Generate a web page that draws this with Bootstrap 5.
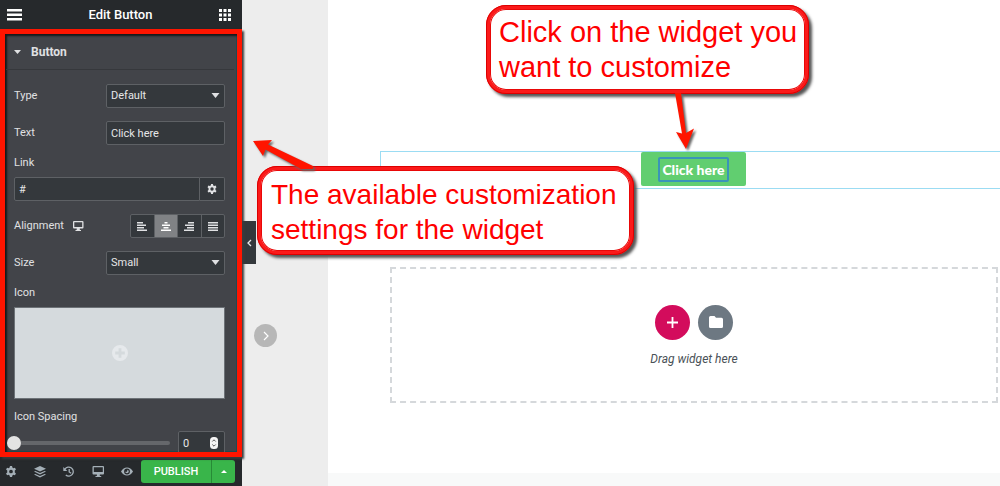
<!DOCTYPE html>
<html lang="en">
<head>
<meta charset="utf-8">
<meta name="viewport" content="width=device-width, initial-scale=1">
<title>Edit Button</title>
<link href="https://cdn.jsdelivr.net/npm/bootstrap@5.3.0/dist/css/bootstrap.min.css" rel="stylesheet">
<style>
  body { font-family: Roboto, sans-serif; font-size: 11px; line-height: 14px; background: #fff; }
  svg { display: block; fill: currentColor; }
  button { font: inherit; color: inherit; border: 0; padding: 0; background: none; }

  /* Side panel */
  .editor-side { width: 242px; background: #26292c; color: #e0e1e3; z-index: 2; }
  .side-head { height: 29px; padding: 0 11px 0 7px; color: #fff; }
  .side-head h1 { font-size: 13px; line-height: 16px; font-weight: 500; }
  .side-panel { border: 5px solid #ff1500; background: #424449; min-height: 0; z-index: 1;
    box-shadow: 2px 2px 2px #3a3c3e, inset 2px 2px 2px #17191b, inset -1px -1px 0 #1d4a52; }
  .section-head { height: 36px; padding: 0 8px; margin: 0 3px 0 1px; border-bottom: 1px solid #36383c; gap: 10px; }
  .section-head h2 { font-size: 12px; line-height: 16px; font-weight: 700; }
  .controls { padding: 14px 12px 0 9px; gap: 13px; }
  .stack { gap: 9px; }
  .stack > label, .stack > .caption { line-height: 10px; }
  .field { height: 24px; background-color: #34383c; border: 1px solid #5e6165; border-radius: 2px; color: #e6e7e8; font-size: 11px; line-height: 14px; padding: 0 4px; min-width: 0; }
  .half { width: 119px; }
  select.field { appearance: none; }
  .caret { right: 5px; top: 9px; pointer-events: none; }
  .field-btn { width: 25px; border: 1px solid #5e6165; border-left: 0; border-radius: 0 2px 2px 0; background: #34383c; }
  .aligns { width: 95px; height: 24px; border: 1px solid #5e6165; border-radius: 2px; background: #34383c; overflow: hidden; }
  .aligns button + button { border-left: 1px solid #5e6165; }
  .aligns .active { background: #808285; color: #fff; }
  .media { height: 92px; background: #d5dadd; color: #e6e9ec; border: 1px solid #6d7277; }
  .slide { appearance: none; background: none; height: 14px; margin-left: -7px; min-width: 0; }
  .slide::-webkit-slider-runnable-track { height: 4px; border-radius: 2px; background: #65676b; }
  .slide::-webkit-slider-thumb { appearance: none; width: 14px; height: 14px; margin-top: -5px; border-radius: 50%; background: #e3e3e3; }
  .amount { width: 47px; appearance: textfield; }
  .amount::-webkit-inner-spin-button { appearance: none; }
  .spin { right: 7px; top: 6px; pointer-events: none; }
  .side-foot { height: 29px; padding: 0 7px 0 5px; color: #a4afb7; }
  .tools { width: 129px; }
  .tools button { width: 13px; }
  .publish { height: 23px; background: #39b54a; color: #fff; border-radius: 3px; overflow: hidden; margin-left: 7px; }
  .publish .main-act { width: 71px; font-weight: 500; border-right: 1px solid #278a36; }

  /* Canvas */
  .gutter { width: 86px; background: #ededed; }
  .fold { left: 0; top: 221px; width: 14px; height: 43px; background: #34383c; color: #e6e7e8; }
  .next { left: 12px; top: 324px; width: 23px; height: 23px; border-radius: 50%; background: #b7b7b7; color: #fff; }
  .site { padding-top: 151px; min-width: 0; overflow: hidden; }
  .widget-row { margin: 0 -7px 78px 52px; height: 38px; border: 1px solid #9bdcf3; }
  .cta { font-family: Lato, sans-serif; font-size: 14px; line-height: 17px; font-weight: 900; color: #fff; background: #61ce70; border-radius: 2px; height: 34px; padding: 0 17px; }
  .cta span { display: block; padding: 2px; border: 2px solid #3a94b8; border-radius: 2px; }
  .dropzone { margin: 0 2px 70px 62px; height: 136px; border: 2px dashed #d5d8db; font-size: 12px; color: #495157; }
  .adders { gap: 8px; margin-bottom: 12px; }
  .round { width: 35px; height: 35px; border-radius: 50%; color: #fff; background: #6d7882; }
  .round.add { background: #d30c5c; }
  .site-foot { min-height: 13px; background: #f8f9f9; }

  /* Callouts laid over the editor */
  .callout { z-index: 3; font-family: "Liberation Sans", sans-serif; font-size: 28px; line-height: 35px; color: #f00; background: #fff; border: 4px solid #fb1a1a; outline: 1px solid #dd0000; outline-offset: -1px; border-radius: 20px; box-shadow: 3px 3px 3px #555, inset 0 0 0 1px #e80808; padding: 7px 10px; height: 89px; white-space: nowrap; }
  .callout svg { filter: drop-shadow(2px 2px 1px #666); fill: #ff1500; }
  .on-widget { left: 486px; top: 5px; width: 323px; font-size: 29px; padding: 6px 9px; }
  .on-widget svg { left: 185px; top: 84px; }
  .on-panel { left: 257px; top: 166px; width: 377px; }
  .on-panel svg { left: -10px; top: -33px; }
</style>
</head>
<body>
<div class="d-flex vh-100 position-relative overflow-hidden">
  <aside class="editor-side d-flex flex-column flex-shrink-0 position-relative">
    <header class="side-head d-flex align-items-center justify-content-between flex-shrink-0">
      <button type="button" aria-label="Menu"><svg width="15" height="12" viewBox="0 0 15 12"><path d="M0 0h15v2.400H0zM0 4.500h15v2.400H0zM0 9h15v2.400H0z"/></svg></button>
      <h1 class="m-0">Edit Button</h1>
      <button type="button" aria-label="Widgets"><svg width="12" height="12" viewBox="0 0 12 12"><path d="M0 0h3v3H0zM4.500 0h3v3h-3zM9 0h3v3H9zM0 4.500h3v3H0zM4.500 4.500h3v3h-3zM9 4.500h3v3H9zM0 9h3v3H0zM4.500 9h3v3h-3zM9 9h3v3H9z"/></svg></button>
    </header>

    <section class="side-panel flex-grow-1 overflow-hidden position-relative">
      <div class="section-head d-flex align-items-center">
        <svg width="7" height="4" viewBox="0 0 7 4"><path d="M0 0h7L3.500 4z"/></svg>
        <h2 class="m-0">Button</h2>
      </div>
      <form class="controls d-flex flex-column">
        <div class="d-flex align-items-center justify-content-between">
          <label for="type">Type</label>
          <div class="half position-relative">
            <select id="type" class="field w-100 d-block"><option>Default</option><option>Info</option></select>
            <svg class="caret position-absolute" width="9" height="5" viewBox="0 0 9 5"><path d="M.5 0h8L4.500 5z"/></svg>
          </div>
        </div>
        <div class="d-flex align-items-center justify-content-between">
          <label for="text">Text</label>
          <input id="text" type="text" class="field half" value="Click here">
        </div>
        <div class="stack d-flex flex-column">
          <label for="link">Link</label>
          <div class="d-flex">
            <input id="link" type="text" class="field flex-grow-1 rounded-end-0" value="#">
            <button type="button" class="field-btn d-flex align-items-center justify-content-center" aria-label="Link options"><svg width="10" height="10" viewBox="0 0 16 16"><path fill-rule="evenodd" d="M6.500 0h3l.5 2.300 1.500.8 2.200-.7 1.500 2.600L13.500 6.600v2.800l1.700 1.600-1.500 2.600-2.200-.7-1.500.8-.5 2.300h-3L6 13.700l-1.500-.8-2.200.7L.8 11l1.700-1.600V6.600L.8 5l1.500-2.600 2.200.7L6 2.300zM8 5.300a2.700 2.700 0 1 0 0 5.400 2.700 2.700 0 0 0 0-5.400z"/></svg></button>
          </div>
        </div>
        <div class="d-flex align-items-center">
          <span>Alignment</span>
          <svg class="ms-2 me-auto" width="13" height="10" viewBox="0 0 13 10"><path fill-rule="evenodd" d="M2 0h8.500q1 0 1 1v5.500q0 1-1 1H7.800V9h1.200v1H3.500V9h1.200V7.500H2q-1 0-1-1V1q0-1 1-1zm.3 1.300v4.600h7.900V1.300z"/></svg>
          <div class="aligns d-flex" role="group" aria-label="Alignment">
            <button type="button" class="flex-fill d-flex align-items-center justify-content-center" aria-label="Left"><svg width="10" height="9" viewBox="0 0 10 9"><path d="M0 0h6v1.500H0zM0 2.500h9V4H0zM0 5h7v1.500H0zM0 7.500h10V9H0z"/></svg></button>
            <button type="button" class="active flex-fill d-flex align-items-center justify-content-center" aria-label="Center"><svg width="10" height="9" viewBox="0 0 10 9"><path d="M3.500 0h3v1.500h-3zM1 2.500h8V4H1zM2.500 5h5v1.500h-5zM0 7.500h10V9H0z"/></svg></button>
            <button type="button" class="flex-fill d-flex align-items-center justify-content-center" aria-label="Right"><svg width="10" height="9" viewBox="0 0 10 9"><path d="M4 0h6v1.500H4zM1 2.500h9V4H1zM3 5h7v1.500H3zM0 7.500h10V9H0z"/></svg></button>
            <button type="button" class="flex-fill d-flex align-items-center justify-content-center" aria-label="Justified"><svg width="10" height="9" viewBox="0 0 10 9"><path d="M0 0h10v1.500H0zM0 2.500h10V4H0zM0 5h10v1.500H0zM0 7.500h10V9H0z"/></svg></button>
          </div>
        </div>
        <div class="d-flex align-items-center justify-content-between">
          <label for="size">Size</label>
          <div class="half position-relative">
            <select id="size" class="field w-100 d-block"><option>Small</option><option>Medium</option></select>
            <svg class="caret position-absolute" width="9" height="5" viewBox="0 0 9 5"><path d="M.5 0h8L4.500 5z"/></svg>
          </div>
        </div>
        <div class="stack d-flex flex-column">
          <span class="caption">Icon</span>
          <button type="button" class="media d-flex align-items-center justify-content-center" aria-label="Choose icon"><svg width="16" height="16" viewBox="0 0 16 16"><path fill-rule="evenodd" d="M8 0a8 8 0 1 0 0 16A8 8 0 0 0 8 0zM6.600 3.200h2.800v3.400h3.400v2.800H9.400v3.400H6.600V9.400H3.200V6.600h3.400z"/></svg></button>
        </div>
        <div class="stack d-flex flex-column">
          <label for="spacing">Icon Spacing</label>
          <div class="d-flex align-items-center">
            <input id="spacing" type="range" class="slide flex-grow-1" min="0" max="50" value="0">
            <div class="position-relative ms-2">
              <input type="number" class="field amount d-block" value="0" aria-label="Icon spacing in pixels">
              <svg class="spin position-absolute" width="8" height="12" viewBox="0 0 8 12"><rect width="8" height="12" rx="3.500" fill="#f4f4f4"/><path d="M2.300 4.500L4 2.800l1.700 1.700M2.300 7.500L4 9.200l1.700-1.700" fill="none" stroke="#555"/></svg>
            </div>
          </div>
        </div>
      </form>
    </section>

    <footer class="side-foot d-flex align-items-center flex-shrink-0">
      <div class="tools d-flex justify-content-between">
        <button type="button" aria-label="Settings"><svg width="12" height="11" viewBox="0 0 16 16"><path fill-rule="evenodd" d="M6.500 0h3l.5 2.300 1.500.8 2.200-.7 1.500 2.600L13.500 6.600v2.800l1.700 1.600-1.500 2.600-2.200-.7-1.500.8-.5 2.300h-3L6 13.700l-1.500-.8-2.200.7L.8 11l1.700-1.600V6.600L.8 5l1.500-2.600 2.200.7L6 2.300zM8 5.300a2.700 2.700 0 1 0 0 5.400 2.700 2.700 0 0 0 0-5.400z"/></svg></button>
        <button type="button" aria-label="Navigator"><svg width="12" height="12" viewBox="0 0 12 12"><path d="M6 0l6 2.700-6 2.800-6-2.800zM1.400 4.900L6 7l4.600-2.100L12 5.600 6 8.400 0 5.600zM1.400 7.900L6 10l4.600-2.100 1.400.7-6 2.900-6-2.900z"/></svg></button>
        <button type="button" aria-label="History"><svg width="12" height="11" viewBox="0 0 12 11"><path d="M2 3.200A4.500 4.500 0 1 1 2.800 9M6.200 3v3l2 1.200" fill="none" stroke="currentColor" stroke-width="1.300"/><path d="M.3 1v4h4z"/></svg></button>
        <button type="button" aria-label="Responsive mode"><svg width="13" height="11" viewBox="0 0 13 11"><path fill-rule="evenodd" d="M1.500 0h9.500q1 0 1 1v6.500q0 1-1 1H7.800V10h1.400v1H3.500v-1h1.400V8.500H1.500q-1 0-1-1V1q0-1 1-1zm.3 1.300v4.800h9V1.300z"/></svg></button>
        <button type="button" aria-label="Preview"><svg width="12" height="11" viewBox="0 0 12 9"><path fill-rule="evenodd" d="M0 4.500Q2.300.5 6 .5t6 4q-2.300 4-6 4t-6-4zM6 1.600a2.900 2.900 0 1 0 0 5.800 2.900 2.900 0 0 0 0-5.800z"/><path d="M6 2.700A1.800 1.800 0 1 1 4.200 4.500 1 1 0 0 0 6 2.700z"/></svg></button>
      </div>
      <div class="publish d-flex flex-grow-1">
        <button type="button" class="main-act">PUBLISH</button>
        <button type="button" class="flex-grow-1 d-flex align-items-center justify-content-center" aria-label="Save options"><svg width="6" height="3" viewBox="0 0 6 3"><path d="M0 3h6L3 0z"/></svg></button>
      </div>
    </footer>
  </aside>

  <div class="gutter flex-shrink-0 position-relative">
    <button type="button" class="fold position-absolute d-flex align-items-center justify-content-center" aria-label="Hide panel"><svg width="5" height="8" viewBox="0 0 5 8"><path d="M4 1L1 4l3 3" fill="none" stroke="currentColor" stroke-width="1.300"/></svg></button>
    <button type="button" class="next position-absolute d-flex align-items-center justify-content-center" aria-label="Next"><svg width="6" height="10" viewBox="0 0 6 10"><path d="M1 1l4 4-4 4" fill="none" stroke="currentColor" stroke-width="1.200"/></svg></button>
  </div>

  <main class="site d-flex flex-column flex-grow-1">
    <div class="widget-row d-flex justify-content-center align-items-start flex-shrink-0">
      <button type="button" class="cta"><span>Click here</span></button>
    </div>
    <div class="dropzone d-flex flex-column align-items-center justify-content-center flex-shrink-0">
      <div class="adders d-flex">
        <button type="button" class="round add d-flex align-items-center justify-content-center" aria-label="Add section"><svg width="11" height="11" viewBox="0 0 11 11"><path d="M4.600 0h1.800v4.600H11v1.800H6.400V11H4.600V6.400H0V4.600h4.600z"/></svg></button>
        <button type="button" class="round d-flex align-items-center justify-content-center" aria-label="Add template"><svg width="14" height="12" viewBox="0 0 14 12"><path d="M1.500 0h4L7 1.800h5.500Q14 1.800 14 3.300v7.200q0 1.500-1.500 1.500h-11Q0 12 0 10.500v-9Q0 0 1.500 0z"/></svg></button>
      </div>
      <em>Drag widget here</em>
    </div>
    <div class="site-foot flex-grow-1"></div>
  </main>

  <div class="callout on-widget position-absolute">
    Click on the widget you<br>want to customize
    <svg class="position-absolute" width="24" height="60" viewBox="0 0 24 60"><path d="M0 0h6l5 40 8-4.500L11 56 1 39l6 1.500z"/></svg>
  </div>
  <div class="callout on-panel position-absolute">
    The available customization<br>settings for the widget
    <svg class="position-absolute" width="70" height="36" viewBox="0 0 70 36"><path d="M2 4L21 3l-4 4.500L62 29v3H50L14.500 12.500 12 19z"/></svg>
  </div>
</div>
<script src="https://cdn.jsdelivr.net/npm/bootstrap@5.3.0/dist/js/bootstrap.bundle.min.js"></script>
</body>
</html>
